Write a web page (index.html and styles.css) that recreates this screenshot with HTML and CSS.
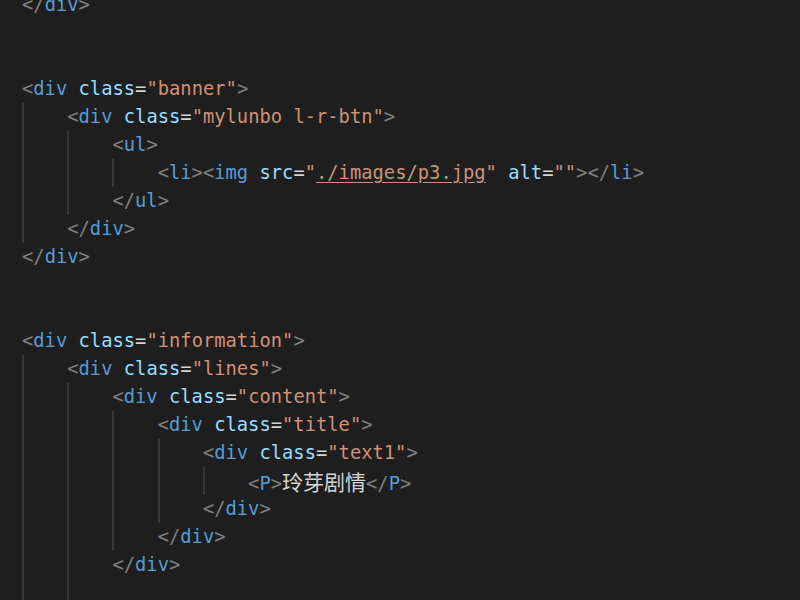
FILE: index.html
```html
<!DOCTYPE html>
<html>
<head>
<meta charset="utf-8">
<link rel="stylesheet" href="styles.css">
</head>
<body>
<div class="editor">
  <div class="line"><span class="p">&lt;/</span><span class="t">div</span><span class="p">&gt;</span></div>
  <div class="line"></div>
  <div class="line"></div>
  <div class="line"><span class="p">&lt;</span><span class="t">div</span> <span class="a">class</span><span class="e">=</span><span class="s">"banner"</span><span class="p">&gt;</span></div>
  <div class="line"><span class="ind"></span><span class="p">&lt;</span><span class="t">div</span> <span class="a">class</span><span class="e">=</span><span class="s">"mylunbo l-r-btn"</span><span class="p">&gt;</span></div>
  <div class="line"><span class="ind"></span><span class="ind"></span><span class="p">&lt;</span><span class="t">ul</span><span class="p">&gt;</span></div>
  <div class="line"><span class="ind"></span><span class="ind"></span><span class="ind"></span><span class="p">&lt;</span><span class="t">li</span><span class="p">&gt;&lt;</span><span class="t">img</span> <span class="a">src</span><span class="e">=</span><span class="s">"<span class="u">./images/p3.jpg</span>"</span> <span class="a">alt</span><span class="e">=</span><span class="s">""</span><span class="p">&gt;&lt;/</span><span class="t">li</span><span class="p">&gt;</span></div>
  <div class="line"><span class="ind"></span><span class="ind"></span><span class="p">&lt;/</span><span class="t">ul</span><span class="p">&gt;</span></div>
  <div class="line"><span class="ind"></span><span class="p">&lt;/</span><span class="t">div</span><span class="p">&gt;</span></div>
  <div class="line"><span class="p">&lt;/</span><span class="t">div</span><span class="p">&gt;</span></div>
  <div class="line"></div>
  <div class="line"></div>
  <div class="line"><span class="p">&lt;</span><span class="t">div</span> <span class="a">class</span><span class="e">=</span><span class="s">"information"</span><span class="p">&gt;</span></div>
  <div class="line"><span class="ind"></span><span class="p">&lt;</span><span class="t">div</span> <span class="a">class</span><span class="e">=</span><span class="s">"lines"</span><span class="p">&gt;</span></div>
  <div class="line"><span class="ind"></span><span class="ind"></span><span class="p">&lt;</span><span class="t">div</span> <span class="a">class</span><span class="e">=</span><span class="s">"content"</span><span class="p">&gt;</span></div>
  <div class="line"><span class="ind"></span><span class="ind"></span><span class="ind"></span><span class="p">&lt;</span><span class="t">div</span> <span class="a">class</span><span class="e">=</span><span class="s">"title"</span><span class="p">&gt;</span></div>
  <div class="line"><span class="ind"></span><span class="ind"></span><span class="ind"></span><span class="ind"></span><span class="p">&lt;</span><span class="t">div</span> <span class="a">class</span><span class="e">=</span><span class="s">"text1"</span><span class="p">&gt;</span></div>
  <div class="line"><span class="ind"></span><span class="ind"></span><span class="ind"></span><span class="ind"></span><span class="ind"></span><span class="p">&lt;</span><span class="t">P</span><span class="p">&gt;</span><span class="cjk">玲芽剧情</span><span class="p">&lt;/</span><span class="t">P</span><span class="p">&gt;</span></div>
  <div class="line"><span class="ind"></span><span class="ind"></span><span class="ind"></span><span class="ind"></span><span class="p">&lt;/</span><span class="t">div</span><span class="p">&gt;</span></div>
  <div class="line"><span class="ind"></span><span class="ind"></span><span class="ind"></span><span class="p">&lt;/</span><span class="t">div</span><span class="p">&gt;</span></div>
  <div class="line"><span class="ind"></span><span class="ind"></span><span class="p">&lt;/</span><span class="t">div</span><span class="p">&gt;</span></div>
  <div class="line"><span class="ind"></span><span class="ind"></span></div>
</div>
</body>
</html>
```
FILE: styles.css
```css
html, body {
  margin: 0;
  padding: 0;
  background: #1e1e1e;
  overflow: hidden;
}
.editor {
  margin-top: -9px;
  padding-left: 22px;
  font-family: "DejaVu Sans Mono", "Noto Sans CJK SC", monospace;
  font-size: 18.8px;
  color: #d4d4d4;
}
.line {
  height: 28px;
  line-height: 28px;
  white-space: pre;
}
.ind {
  display: inline-block;
  width: 4ch;
  height: 28px;
  vertical-align: top;
  box-sizing: border-box;
  border-left: 2px solid #363636;
}
.p { color: #808080; }
.t { color: #569cd6; }
.a { color: #9cdcfe; }
.e { color: #d4d4d4; }
.s { color: #ce9178; }
.u { text-decoration: underline; text-underline-offset: 3px; }
.cjk {
  font-family: "Noto Sans CJK SC", sans-serif;
  font-size: 21px;
  color: #d4d4d4;
}
```
